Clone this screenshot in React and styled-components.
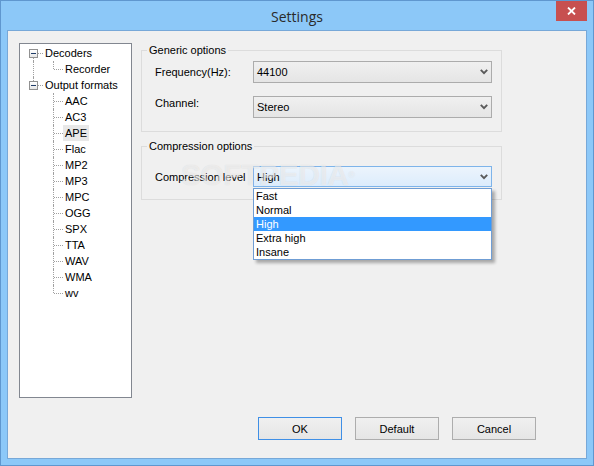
import React from "react";
import styled, { createGlobalStyle } from "styled-components";

const Global = createGlobalStyle`
  html, body { margin: 0; padding: 0; }
  body {
    width: 594px; height: 466px; overflow: hidden;
    font-family: "Liberation Sans", Arial, sans-serif;
    font-size: 11px; color: #000;
  }
  * { box-sizing: border-box; }
`;

const Window = styled.div`
  width: 594px;
  height: 466px;
  background: #8cc8f8;
  border: 1px solid #5f97cf;
  display: flex;
  flex-direction: column;
`;

const TitleBar = styled.div`
  height: 29px;
  flex: none;
  display: grid;
  grid-template-columns: 1fr auto 1fr;
`;

const Title = styled.div`
  grid-column: 2;
  align-self: center;
  font-family: "Open Sans", "Noto Sans", sans-serif;
  font-size: 14px;
  color: #2a2a2a;
  padding-top: 1px;
`;

const CloseButton = styled.div`
  grid-column: 3;
  justify-self: end;
  align-self: start;
  width: 31px;
  height: 20px;
  margin-right: 6px;
  background: #c75050;
  display: flex;
  align-items: center;
  justify-content: center;
`;

const Client = styled.div`
  flex: 1;
  margin: 0 6px 6px;
  background: #f0f0f0;
  border: 1px solid #77a8d8;
  padding: 12px 50px 0 11px;
  display: flex;
  flex-direction: column;
  position: relative;
`;

const Top = styled.div`
  display: flex;
  align-items: flex-start;
  gap: 9px;
`;

const Tree = styled.div`
  width: 113px;
  height: 355px;
  flex: none;
  border: 1px solid #828790;
  background: #fff;
  padding: 1px 0 0 3px;
`;

const TreeRow = styled.div`
  height: 16px;
  display: flex;
  align-items: center;
`;

const Cell = styled.span`
  width: 20px;
  height: 16px;
  flex: none;
  position: relative;
  &::before {
    content: "";
    display: ${(p) => (p.$up || p.$down ? "block" : "none")};
    position: absolute;
    left: 10px;
    top: ${(p) => (p.$up ? 0 : 8)}px;
    bottom: ${(p) => (p.$down ? 0 : 8)}px;
    border-left: 1px dotted #a0a0a0;
  }
  &::after {
    content: "";
    display: ${(p) => (p.$right ? "block" : "none")};
    position: absolute;
    left: 11px;
    top: 8px;
    width: 9px;
    border-top: 1px dotted #a0a0a0;
  }
`;

const Expander = styled.span`
  position: absolute;
  z-index: 1;
  left: 6px;
  top: 4px;
  width: 9px;
  height: 9px;
  border: 1px solid #919191;
  background: linear-gradient(#ffffff, #e6e6e6);
  &::before {
    content: "";
    position: absolute;
    left: 1px;
    top: 3px;
    width: 5px;
    height: 1px;
    background: #1f3c68;
  }
`;

const NodeLabel = styled.span`
  height: 16px;
  line-height: 16px;
  padding: 0 2px;
  white-space: nowrap;
  background: ${(p) => (p.$selected ? "#e8e8e8" : "transparent")};
`;

const Side = styled.div`
  display: flex;
  flex-direction: column;
  gap: 7px;
`;

const Group = styled.fieldset`
  margin: 0;
  width: 361px;
  min-inline-size: 0;
  border: 1px solid #dcdcdc;
  padding: 0 8px ${(p) => p.$pb}px 5px;
`;

const Legend = styled.legend`
  padding: 0 2px;
  font-size: 11px;
  line-height: 14px;
`;

const Fields = styled.div`
  display: flex;
  flex-direction: column;
  gap: 13px;
  padding: ${(p) => p.$pt}px 0 0 8px;
`;

const FieldRow = styled.div`
  display: flex;
  align-items: center;
`;

const FieldLabel = styled.span`
  width: 98px;
  flex: none;
  margin-bottom: ${(p) => (p.$lift || 0) * 2}px;
`;

const Combo = styled.div`
  position: relative;
  width: 239px;
  height: ${(p) => p.$h}px;
  border: 1px solid ${(p) => (p.$active ? "#7eb4ea" : "#acacac")};
  background: ${(p) =>
    p.$active
      ? "linear-gradient(#ecf4fc, #dcecfc)"
      : "linear-gradient(#f0f0f0, #e5e5e5)"};
  display: flex;
  align-items: center;
  padding: 0 3px 0 3px;
`;

const ComboText = styled.span`
  flex: 1;
`;

const DropList = styled.div`
  position: absolute;
  z-index: 5;
  left: -1px;
  top: calc(100% + 2px);
  width: 239px;
  border: 1px solid #6f9dd4;
  background: #fff;
  box-shadow: 3px 3px 3px rgba(0, 0, 0, 0.3);
`;

const DropItem = styled.div`
  height: 14px;
  line-height: 14px;
  padding-left: 2px;
  background: ${(p) => (p.$selected ? "#3399ff" : "transparent")};
  color: ${(p) => (p.$selected ? "#fff" : "#000")};
`;

const ButtonRow = styled.div`
  display: flex;
  justify-content: flex-end;
  gap: 13px;
  margin-top: 19px;
`;

const Button = styled.div`
  width: 84px;
  height: 23px;
  border: 1px solid ${(p) => (p.$primary ? "#3f8fe6" : "#adadad")};
  background: linear-gradient(#f0f0f0, #e5e5e5);
  display: flex;
  align-items: center;
  justify-content: center;
`;

const Watermark = styled.div`
  position: absolute;
  left: 173px;
  top: 129px;
  font-family: "Liberation Sans", Arial, sans-serif;
  font-weight: bold;
  font-size: 30px;
  line-height: 30px;
  letter-spacing: -0.5px;
  color: rgba(255, 255, 255, 0.55);
  text-shadow: 0 0 1px rgba(0, 0, 0, 0.12);
  pointer-events: none;
  z-index: 3;
  sup {
    font-size: 9px;
    vertical-align: top;
    font-weight: normal;
  }
`;

const Chevron = () => (
  <svg width="8" height="6" viewBox="0 0 8 6">
    <polyline points="0.8,0.8 4,4.2 7.2,0.8" fill="none" stroke="#5a5a5a" strokeWidth="1.9" />
  </svg>
);

const CloseIcon = () => (
  <svg width="9" height="8" viewBox="0 0 9 8">
    <path d="M1 0.5 L8 7.5 M8 0.5 L1 7.5" stroke="#fff" strokeWidth="1.8" />
  </svg>
);

const formats = ["AAC", "AC3", "APE", "Flac", "MP2", "MP3", "MPC", "OGG", "SPX", "TTA", "WAV", "WMA", "wv"];

const treeRows = [
  { label: "Decoders", cells: [{ down: true, right: true, box: true }] },
  { label: "Recorder", cells: [{ up: true, down: true }, { up: true, right: true }] },
  { label: "Output formats", cells: [{ up: true, right: true, box: true }] },
  ...formats.map((f, i) => ({
    label: f,
    selected: f === "APE",
    cells: [{}, { up: true, down: i < formats.length - 1, right: true }],
  })),
];

const levels = ["Fast", "Normal", "High", "Extra high", "Insane"];

export default function App() {
  return (
    <>
      <Global />
      <Window>
        <TitleBar>
          <Title>Settings</Title>
          <CloseButton>
            <CloseIcon />
          </CloseButton>
        </TitleBar>
        <Client>
          <Top>
            <Tree>
              {treeRows.map((r) => (
                <TreeRow key={r.label}>
                  {r.cells.map((c, i) => (
                    <Cell key={i} $up={c.up} $down={c.down} $right={c.right}>
                      {c.box && <Expander />}
                    </Cell>
                  ))}
                  <NodeLabel $selected={r.selected}>{r.label}</NodeLabel>
                </TreeRow>
              ))}
            </Tree>
            <Side>
              <Group $pb={13}>
                <Legend>Generic options</Legend>
                <Fields $pt={4}>
                  <FieldRow>
                    <FieldLabel>Frequency(Hz):</FieldLabel>
                    <Combo $h={22}>
                      <ComboText>44100</ComboText>
                      <Chevron />
                    </Combo>
                  </FieldRow>
                  <FieldRow>
                    <FieldLabel $lift={4}>Channel:</FieldLabel>
                    <Combo $h={22}>
                      <ComboText>Stereo</ComboText>
                      <Chevron />
                    </Combo>
                  </FieldRow>
                </Fields>
              </Group>
              <Group $pb={12}>
                <Legend>Compression options</Legend>
                <Fields $pt={13}>
                  <FieldRow>
                    <FieldLabel>Compression level</FieldLabel>
                    <Combo $h={21} $active>
                      <ComboText>High</ComboText>
                      <Chevron />
                      <DropList>
                        {levels.map((l) => (
                          <DropItem key={l} $selected={l === "High"}>
                            {l}
                          </DropItem>
                        ))}
                      </DropList>
                    </Combo>
                  </FieldRow>
                </Fields>
              </Group>
            </Side>
          </Top>
          <ButtonRow>
            <Button $primary>OK</Button>
            <Button>Default</Button>
            <Button>Cancel</Button>
          </ButtonRow>
          <Watermark>
            SOFTPEDIA<sup>®</sup>
          </Watermark>
        </Client>
      </Window>
    </>
  );
}
